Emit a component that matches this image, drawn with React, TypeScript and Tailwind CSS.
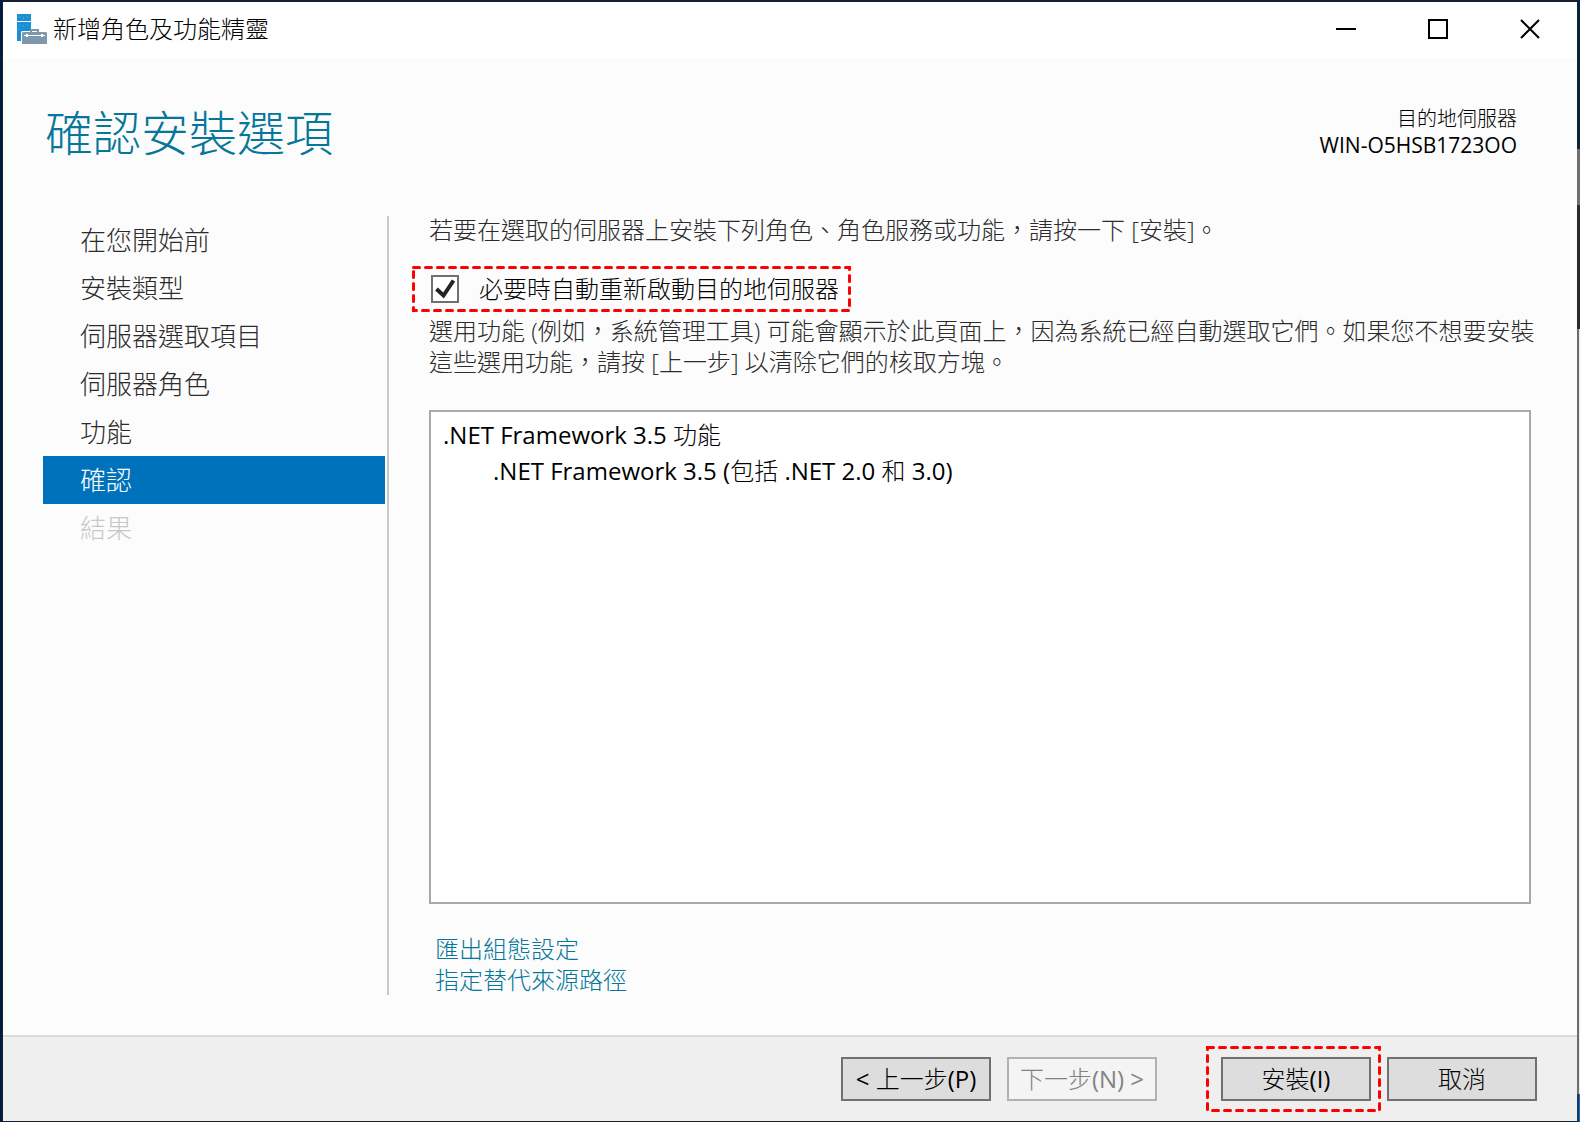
import { useState } from "react";
import type { ReactNode } from "react";

const steps = [
  { label: "在您開始前", state: "open" },
  { label: "安裝類型", state: "open" },
  { label: "伺服器選取項目", state: "open" },
  { label: "伺服器角色", state: "open" },
  { label: "功能", state: "open" },
  { label: "確認", state: "current" },
  { label: "結果", state: "locked" },
];

const stepStyle: Record<string, string> = {
  open: "text-[#2b2b2b]",
  current: "bg-[#0072bc] text-white",
  locked: "text-[#c8c8c8]",
};

function DashedMark({ className }: { className: string }) {
  return (
    <span className={`pointer-events-none absolute ${className}`}>
      <svg className="size-full overflow-visible" aria-hidden="true">
        <rect x="0.5" y="0.5" width="100%" height="100%" fill="none" stroke="#ff0000" strokeWidth="3" strokeDasharray="6 6" strokeLinecap="round" />
      </svg>
    </span>
  );
}

function Latin({ children }: { children: ReactNode }) {
  return <span className="font-normal">{children}</span>;
}

function ServerIcon() {
  return (
    <svg className="size-[30px] shrink-0" viewBox="0 0 30 30" aria-hidden="true">
      <path d="M0 0h14v7H0zM0 8h14v7h-1v2H5l-1 1v9H0z" fill="#1b8fd6" />
      <path d="M2 3h1M6 4h1M10 3h1M2 11h1M6 12h1M10 11h1M1 15h1" stroke="#5db4e8" />
      <path d="M14 18v-2h7v2" fill="none" stroke="#7d97ad" strokeWidth="2" />
      <path d="M6 18h23l1 1v11H5V19z" fill="#7d97ad" />
      <path d="M7 21.5h21" stroke="#fff" />
      <path d="M10 20v3M25 20v3" stroke="#fff" strokeWidth="2" />
    </svg>
  );
}

const buttonBase = "h-11 w-[150px] border-2 text-2xl leading-none whitespace-nowrap";

export default function App() {
  const [restart, setRestart] = useState(true);
  return (
    <div className="flex min-h-screen border-l-2 border-[#001c3f] font-['Open_Sans','Noto_Sans_CJK_TC',sans-serif] font-light text-black">
      <div className="flex flex-1 flex-col border-t-2 border-b border-l border-[#17202e] bg-[#fcfcfc]">
        <header className="flex h-14 items-center bg-white pr-px pb-0.5 pl-[14px]">
          <ServerIcon />
          <span className="ml-1.5 text-2xl">新增角色及功能精靈</span>
          <div className="ml-auto flex h-full">
            <button aria-label="最小化" className="grid w-[92px] place-items-center">
              <svg width="20" height="20"><path d="M0 10h20" stroke="#000" strokeWidth="2" /></svg>
            </button>
            <button aria-label="最大化" className="grid w-[92px] place-items-center">
              <svg width="20" height="20"><rect x="1" y="1" width="18" height="18" fill="none" stroke="#000" strokeWidth="2" /></svg>
            </button>
            <button aria-label="關閉" className="grid w-[92px] place-items-center">
              <svg width="20" height="20"><path d="M1 1l18 18M19 1L1 19" stroke="#000" strokeWidth="2" /></svg>
            </button>
          </div>
        </header>

        <div className="flex h-[158px] items-start justify-between pr-[60px] pl-[42px]">
          <h1 className="mt-10 text-5xl leading-[70px] text-[#04779b]">確認安裝選項</h1>
          <div className="mt-12 text-right text-xl leading-[26px]">
            <p>目的地伺服器</p>
            <p className="text-[21px]"><Latin>WIN-O5HSB1723OO</Latin></p>
          </div>
        </div>

        <div className="mb-10 flex flex-1 pl-10">
          <nav className="w-[346px] shrink-0 border-r-2 border-[#c8c8c8] pr-0.5">
            <ol>
              {steps.map((s) => (
                <li key={s.label}>
                  <button
                    disabled={s.state === "locked"}
                    aria-current={s.state === "current" ? "step" : undefined}
                    className={`flex h-12 w-full items-center pl-[37px] text-[26px] ${stepStyle[s.state]}`}
                  >
                    {s.label}
                  </button>
                </li>
              ))}
            </ol>
          </nav>

          <main className="flex flex-1 flex-col pr-10 pl-10 text-2xl leading-[31px]">
            <p className="leading-7 text-[#2b2b2b]">若要在選取的伺服器上安裝下列角色、角色服務或功能，請按一下 [安裝]。</p>
            <div className="relative mt-[23px] -ml-4 flex h-[43px] w-[436px] items-center pl-[18px]">
              <DashedMark className="inset-0" />
              <span className="relative grid size-7">
                <input
                  id="restart"
                  type="checkbox"
                  checked={restart}
                  onChange={(e) => setRestart(e.target.checked)}
                  className="size-7 appearance-none border-2 border-[#707070] bg-white"
                />
                {restart && (
                  <svg className="pointer-events-none absolute inset-0 size-7" viewBox="0 0 28 28" aria-hidden="true">
                    <path d="M5.500 14l7 6.500L22.500 5.500" fill="none" stroke="#212428" strokeWidth="4" />
                  </svg>
                )}
              </span>
              <label htmlFor="restart" className="pl-5 whitespace-nowrap">必要時自動重新啟動目的地伺服器</label>
            </div>
            <p className="mt-[5px] -mr-2 text-[#2b2b2b]">
              選用功能 (例如，系統管理工具) 可能會顯示於此頁面上，因為系統已經自動選取它們。如果您不想要安裝這些選用功能，請按 [上一步] 以清除它們的核取方塊。
            </p>
            <ul className="mt-[33px] mr-1.5 flex-1 border-2 border-[#a9a9a9] bg-white px-3 py-[5px] leading-9">
              <li>
                <Latin>.NET Framework 3.5 </Latin>功能
                <ul className="pl-[50px]">
                  <li>
                    <Latin>.NET Framework 3.5 (</Latin>包括<Latin> .NET 2.0 </Latin>和<Latin> 3.0)</Latin>
                  </li>
                </ul>
              </li>
            </ul>
            <div className="mt-[29px] flex flex-col items-start pl-1.5 text-[#04779b]">
              <a href="#export">匯出組態設定</a>
              <a href="#source">指定替代來源路徑</a>
            </div>
          </main>
        </div>

        <footer className="flex h-[86px] items-center justify-end gap-4 border-t-2 border-[#d9dada] bg-[#efefef] pr-10">
          <button className={`${buttonBase} border-[#707070] bg-[#dddddd]`}><Latin>&lt; </Latin>上一步<Latin>(P)</Latin></button>
          <button disabled className={`${buttonBase} border-[#adb2b5] bg-[#f4f4f4] text-[#838383]`}>下一步<Latin>(N) &gt;</Latin></button>
          <span className="relative ml-12 flex">
            <DashedMark className="-top-2.5 -right-2 -bottom-[9px] -left-3.5" />
            <button className={`${buttonBase} border-[#707070] bg-[#dddddd]`}>安裝<Latin>(I)</Latin></button>
          </span>
          <button className={`${buttonBase} border-[#707070] bg-[#dddddd]`}>取消</button>
        </footer>
      </div>

      <div className="flex w-[3px] flex-col" aria-hidden="true">
        <div className="h-[149px] bg-[#0d213f]" />
        <div className="h-14 bg-[#6e6e6e]" />
        <div className="h-[124px] bg-[#2b2b2b]" />
        <div className="flex-1 border-r border-[#e8e8e8] bg-[#6e6e6e]" />
        <div className="h-7 border-r border-[#0f6cb8] bg-[#1c3a5c]" />
      </div>
    </div>
  );
}
